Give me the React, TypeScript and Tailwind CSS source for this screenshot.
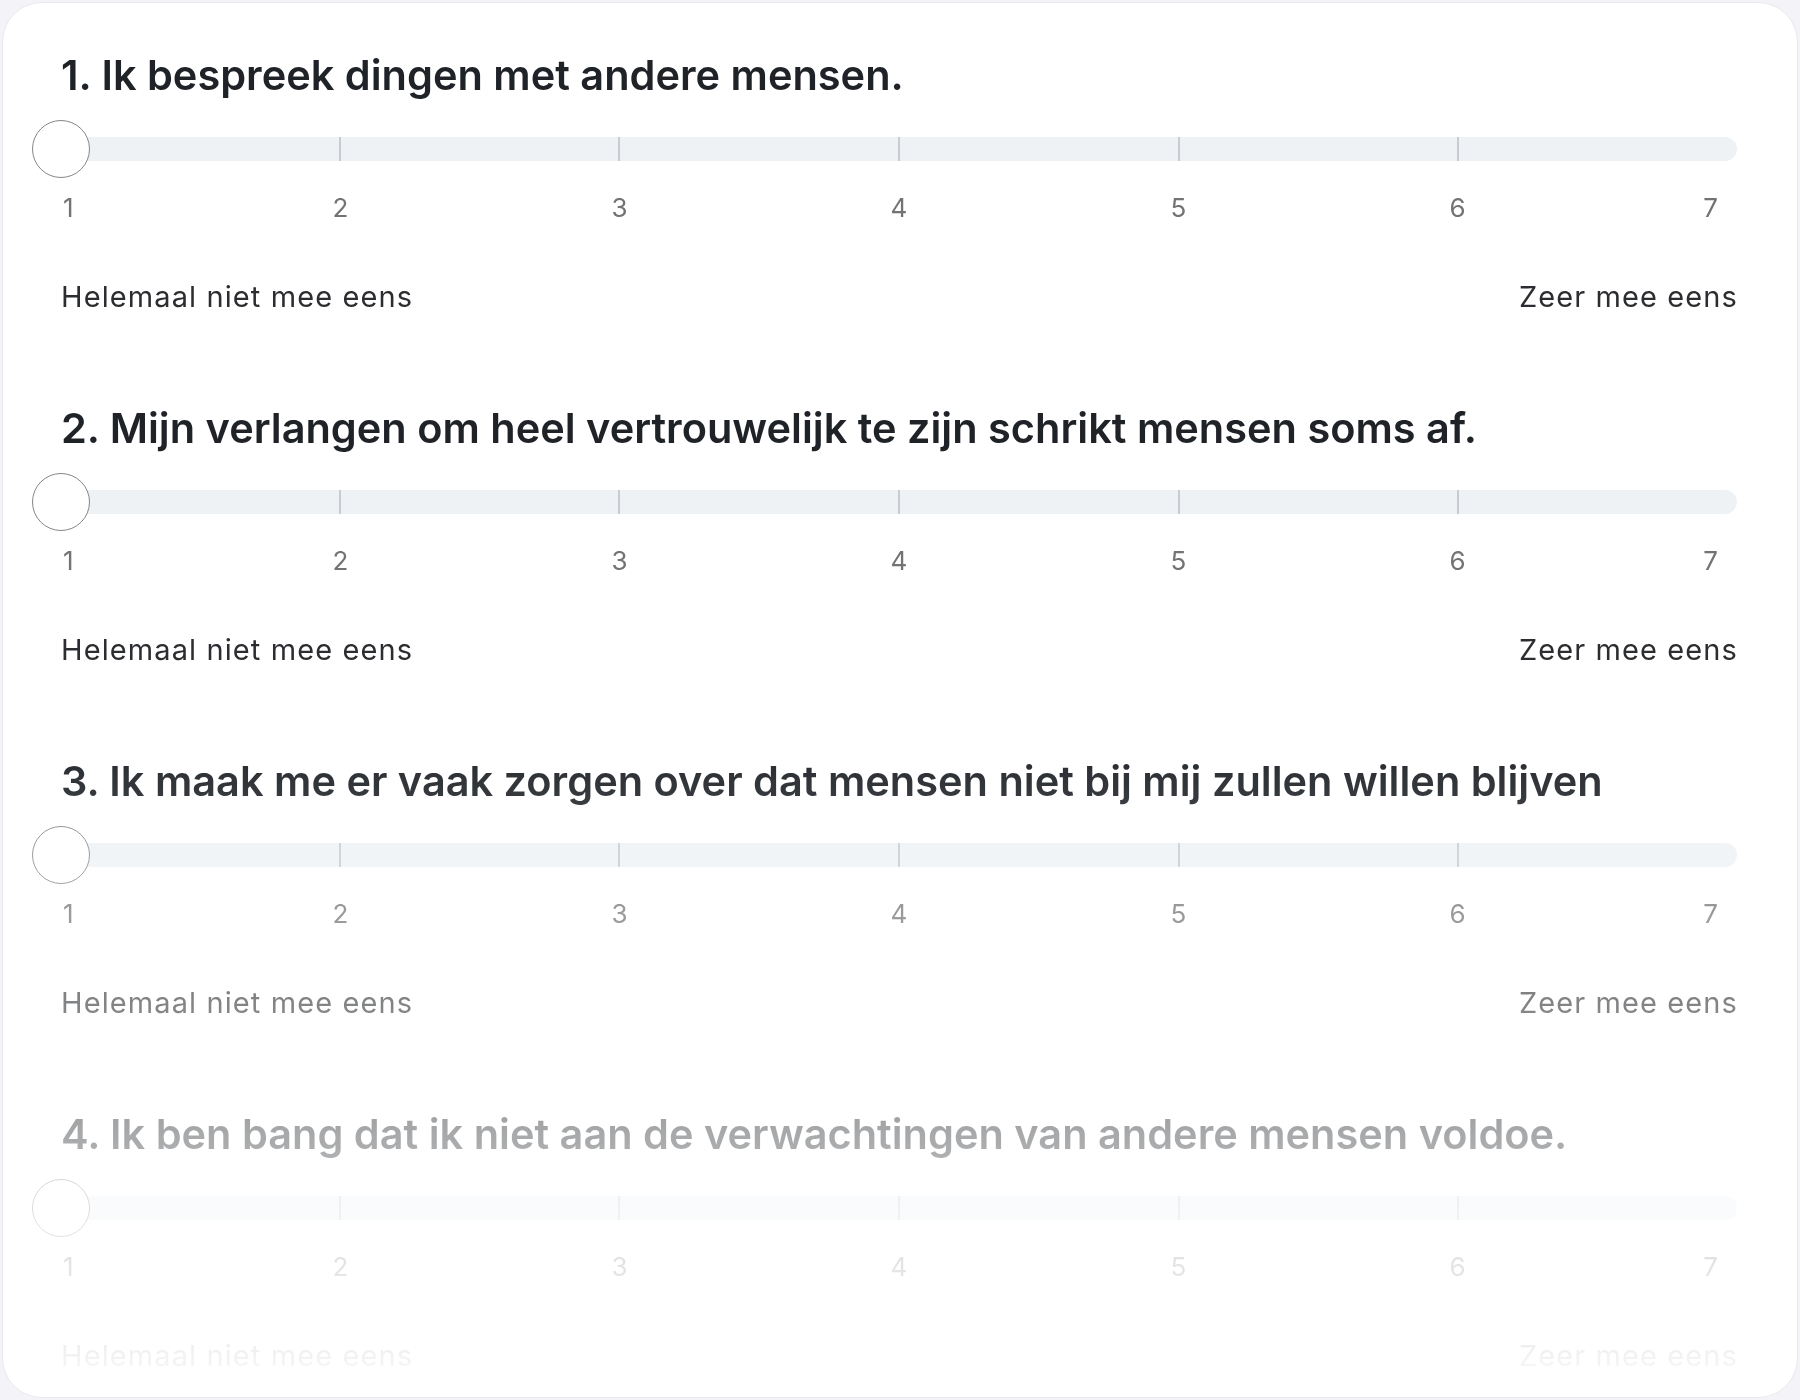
import React from "react";

// Questionnaire items, 7-point Likert scale
const questions: string[] = [
  "1. Ik bespreek dingen met andere mensen.",
  "2. Mijn verlangen om heel vertrouwelijk te zijn schrikt mensen soms af.",
  "3. Ik maak me er vaak zorgen over dat mensen niet bij mij zullen willen blijven",
  "4. Ik ben bang dat ik niet aan de verwachtingen van andere mensen voldoe.",
];

const middle = [2, 3, 4, 5, 6];

const ScaleSlider: React.FC = () => {
  return (
    <div className="relative mt-5 flex h-[58px] items-center">
      <div className="flex h-6 w-full overflow-hidden rounded-full bg-[#eef2f5]">
        <div className="flex-1" />
        {middle.map((n) => (
          <div key={n} className="flex-1 border-l-2 border-[#c6ccd2]" />
        ))}
      </div>
      {/* thumb sits over the track at value 1 */}
      <div className="absolute left-[-29px] top-0 h-[58px] w-[58px] rounded-full border-[1.5px] border-[#858585] bg-white" />
    </div>
  );
};

const Question: React.FC<{ title: string }> = ({ title }) => {
  return (
    <div className="flex flex-col">
      <h2 className="text-[41.5px] font-semibold leading-[50px] text-[#1f2328]">{title}</h2>
      <ScaleSlider />
      <div className="mt-[14px] flex text-[26px] leading-[32px] text-[#737373]">
        <span className="w-1/12 pl-[2px] text-left">1</span>
        {middle.map((n) => (
          <span key={n} className="w-1/6 text-center">
            {n}
          </span>
        ))}
        <span className="flex-1 pr-[19px] text-right">7</span>
      </div>
      <div className="mt-[55px] flex justify-between text-[29px] leading-[36px] tracking-[1.1px] text-[#2b2d30]">
        <span>Helemaal niet mee eens</span>
        <span className="mr-[-1px]">Zeer mee eens</span>
      </div>
    </div>
  );
};

export default function App() {
  return (
    <div className="min-h-screen bg-[#f4f4f8] p-[2px]" style={{ fontFamily: "Inter, 'Noto Sans', sans-serif" }}>
      <div className="h-[1396px] overflow-hidden rounded-[40px] border border-[#e9e9f0] bg-white">
        <div className="flex h-full flex-col gap-[88px] pl-[58px] pr-[60px] pt-[47px] [-webkit-mask-image:linear-gradient(to_bottom,#000_52%,transparent_100%)] [mask-image:linear-gradient(to_bottom,#000_52%,transparent_100%)]">
          {questions.map((q) => (
            <Question key={q} title={q} />
          ))}
        </div>
      </div>
    </div>
  );
}
